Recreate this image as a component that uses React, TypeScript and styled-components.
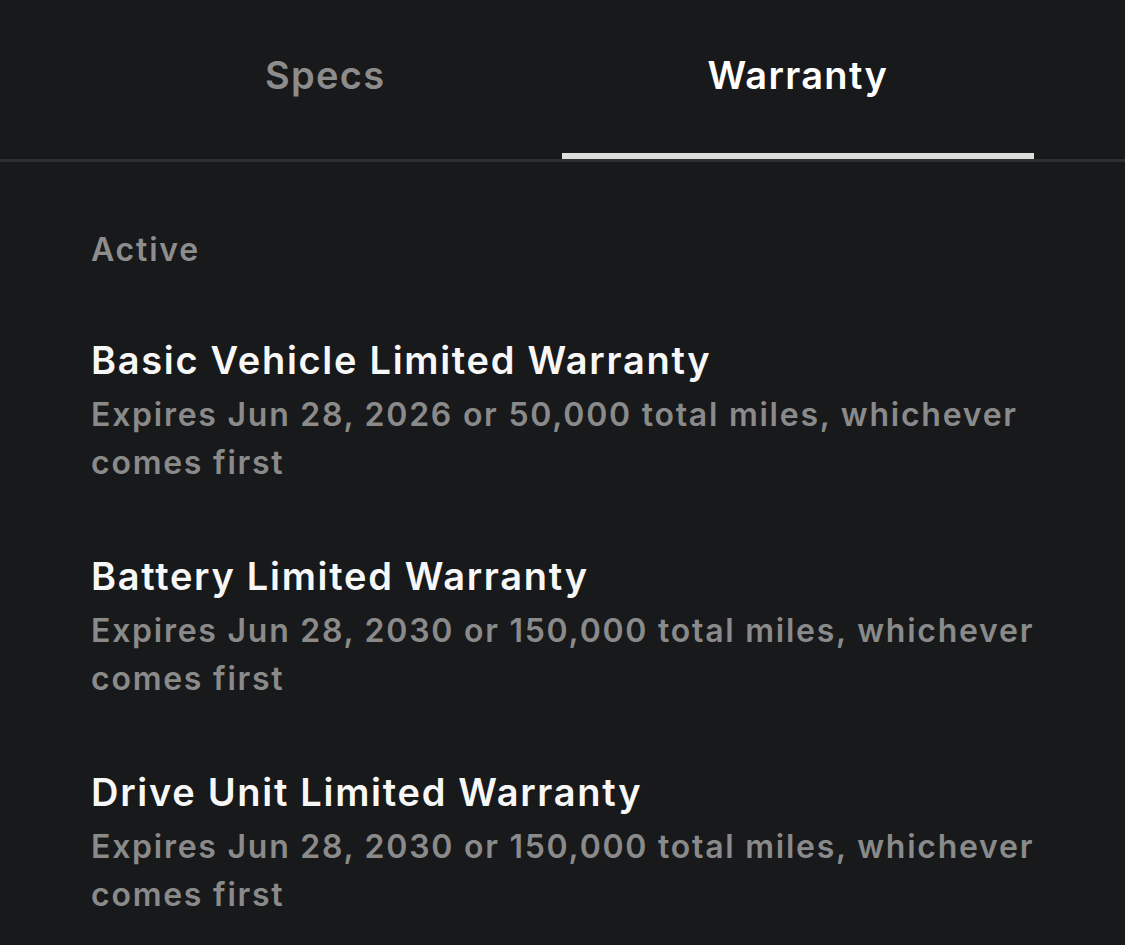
import React, { useState } from 'react';
import styled, { createGlobalStyle } from 'styled-components';

const GlobalStyle = createGlobalStyle`
  html, body {
    margin: 0;
    padding: 0;
    background: #18191b;
  }
  body {
    font-family: Inter, 'Noto Sans', sans-serif;
    -webkit-font-smoothing: antialiased;
  }
`;

interface IWarranty {
  id: number;
  title: string;
  detail: string;
}

const warranties: IWarranty[] = [
  {
    id: 1,
    title: 'Basic Vehicle Limited Warranty',
    detail: 'Expires Jun 28, 2026 or 50,000 total miles, whichever comes first',
  },
  {
    id: 2,
    title: 'Battery Limited Warranty',
    detail: 'Expires Jun 28, 2030 or 150,000 total miles, whichever comes first',
  },
  {
    id: 3,
    title: 'Drive Unit Limited Warranty',
    detail: 'Expires Jun 28, 2030 or 150,000 total miles, whichever comes first',
  },
];

export default function App() {
  const [tab, setTab] = useState<'specs' | 'warranty'>('warranty');

  return (
    <>
      <GlobalStyle />
      <Page>
        <TabBar>
          <Tab $active={tab === 'specs'} onClick={() => setTab('specs')}>
            Specs
          </Tab>
          <Tab $active={tab === 'warranty'} onClick={() => setTab('warranty')}>
            Warranty
          </Tab>
        </TabBar>
        <Content>
          <SectionLabel>Active</SectionLabel>
          <List>
            {warranties.map((w) => (
              <Item key={w.id}>
                <ItemTitle>{w.title}</ItemTitle>
                <ItemDetail>{w.detail}</ItemDetail>
              </Item>
            ))}
          </List>
        </Content>
      </Page>
    </>
  );
}

const Page = styled.div`
  width: 1125px;
  min-height: 945px;
  background: #18191b;
`;

const TabBar = styled.div`
  display: flex;
  padding: 0 91px 0 89px;
  border-bottom: 3px solid #2e2f31;
`;

const Tab = styled.button<{ $active: boolean }>`
  flex: 1;
  height: 159px;
  display: flex;
  align-items: center;
  justify-content: center;
  background: none;
  border: none;
  border-bottom: 6px solid ${(p) => (p.$active ? '#dcdedd' : 'transparent')};
  padding: 0 0 4px;
  font-family: Inter, 'Noto Sans', sans-serif;
  font-size: 38px;
  font-weight: 600;
  letter-spacing: 1.3px;
  color: ${(p) => (p.$active ? '#ffffff' : '#8c8c8c')};
  cursor: pointer;
`;

const Content = styled.div`
  padding: 68px 60px 0 91px;
`;

const SectionLabel = styled.div`
  font-size: 32px;
  font-weight: 600;
  color: #8d8d8d;
  line-height: 40px;
  letter-spacing: 1.8px;
`;

const List = styled.div`
  display: flex;
  flex-direction: column;
  gap: 65px;
  margin-top: 66px;
`;

const Item = styled.div`
  display: flex;
  flex-direction: column;
  gap: 7px;
`;

const ItemTitle = styled.div`
  font-size: 38px;
  font-weight: 600;
  color: #f7f7f7;
  line-height: 48px;
  letter-spacing: 1.7px;
`;

const ItemDetail = styled.div`
  font-size: 32px;
  font-weight: 600;
  color: #8a8a8a;
  line-height: 48px;
  letter-spacing: 1.75px;
`;
